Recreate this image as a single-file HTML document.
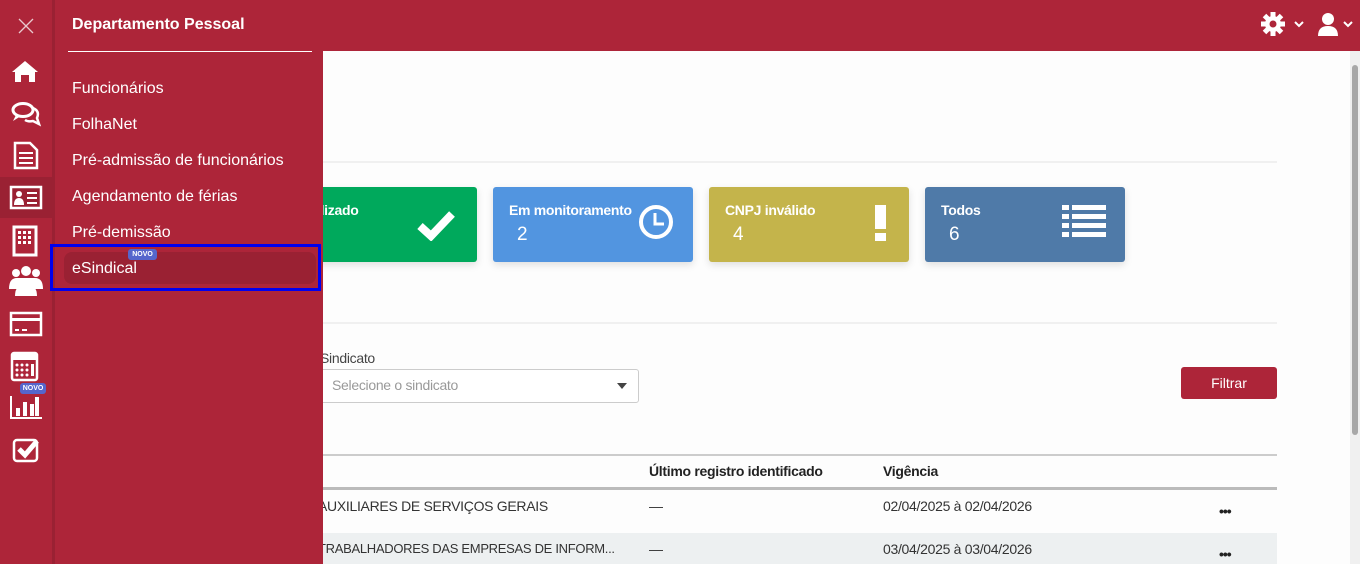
<!DOCTYPE html>
<html><head><meta charset="utf-8"><style>
*{margin:0;padding:0;box-sizing:border-box}
body{width:1360px;height:564px;overflow:hidden;font-family:"Liberation Sans",Arial,sans-serif;background:#fff;position:relative}
.top{position:absolute;left:0;top:0;width:1360px;height:51px;background:#ad2539}
.rail{position:absolute;left:0;top:0;width:52px;height:564px;background:#ad2539}
.railb{position:absolute;left:52px;top:0;width:3px;height:564px;background:#9a2133}
.panel{position:absolute;left:55px;top:0;width:268px;height:564px;background:#ad2539;color:#fff}
.main{position:absolute;left:323px;top:51px;width:1027px;height:513px;background:#fdfdfd}
.sb{position:absolute;left:1350px;top:51px;width:10px;height:513px;background:#f0f0f0}
.sb div{position:absolute;left:2px;top:14px;width:6px;height:370px;background:#a8a8a8;border-radius:3px}
.mi{position:absolute;left:17px;font-size:16px;color:#fff}
.card{position:absolute;top:187px;width:200px;height:75px;border-radius:3px;color:#fff;box-shadow:0 3px 8px rgba(0,0,0,.12)}
.card b{position:absolute;left:16px;top:15px;font-size:14px;letter-spacing:-0.3px}
.card span{position:absolute;left:24px;top:37px;font-size:19px}
.card svg{position:absolute}
.hl{position:absolute;height:2px;background:#f0f0f0}
.t{position:absolute;font-size:14px;color:#333;letter-spacing:-0.3px;white-space:nowrap}
.dots{position:absolute;left:1219px;font-weight:bold;font-size:14px;color:#222;letter-spacing:-1px}
.badge{position:absolute;background:#5566cc;color:#fff;font-size:7px;font-weight:bold;border-radius:3px;text-align:center}
</style></head><body>
<div class="top"></div>
<div class="main">
 <div class="hl" style="left:0;top:110px;width:954px"></div>
 <div class="hl" style="left:0;top:271px;width:954px"></div>
</div>
<div class="card" style="left:277px;background:#00a95c"><b>Finalizado</b>
 <svg style="left:139px;top:22px" width="40" height="32" viewBox="0 0 40 32"><path d="M4 17 L15 27 L36 5" stroke="#fff" stroke-width="8" fill="none"/></svg></div>
<div class="card" style="left:493px;background:#5295e0"><b>Em monitoramento</b><span>2</span>
 <svg style="left:144px;top:16px" width="38" height="38" viewBox="0 0 38 38"><circle cx="19" cy="19" r="15" stroke="#fff" stroke-width="4" fill="none"/><path d="M18 10 V21 H27" stroke="#fff" stroke-width="3" fill="none"/></svg></div>
<div class="card" style="left:709px;background:#c4b44b"><b>CNPJ inválido</b><span>4</span>
 <svg style="left:164px;top:18px" width="16" height="36"><rect x="2" y="0" width="11" height="24" fill="#fff"/><rect x="2" y="28" width="11" height="8" fill="#fff"/></svg></div>
<div class="card" style="left:925px;background:#4f7aa8"><b>Todos</b><span>6</span>
 <svg style="left:137px;top:18px" width="44" height="34" fill="#fff"><rect x="0" y="0" width="7" height="5"/><rect x="10" y="0" width="34" height="5"/><rect x="0" y="9" width="7" height="5"/><rect x="10" y="9" width="34" height="5"/><rect x="0" y="18" width="7" height="5"/><rect x="10" y="18" width="34" height="5"/><rect x="0" y="27" width="7" height="5"/><rect x="10" y="27" width="34" height="5"/></svg></div>
<div class="t" style="left:320px;top:350px;color:#444">Sindicato</div>
<div style="position:absolute;left:318px;top:369px;width:321px;height:34px;border:1px solid #ccc;border-radius:3px;background:#fff"></div>
<div class="t" style="left:332px;top:377px;color:#999">Selecione o sindicato</div>
<div style="position:absolute;left:617px;top:383px;border-left:5px solid transparent;border-right:5px solid transparent;border-top:6px solid #444"></div>
<div style="position:absolute;left:1181px;top:367px;width:96px;height:32px;background:#ad2539;border-radius:3px;color:#fff;font-size:14px;text-align:center;line-height:32px">Filtrar</div>
<div style="position:absolute;left:323px;top:454px;width:954px;height:2px;background:#ccc"></div>
<div style="position:absolute;left:323px;top:487px;width:954px;height:3px;background:#bbb"></div>
<div class="t" style="left:649px;top:463px;font-weight:bold;color:#222">Último registro identificado</div>
<div class="t" style="left:883px;top:463px;font-weight:bold;color:#222">Vigência</div>
<div class="t" style="left:318px;top:498px">AUXILIARES DE SERVIÇOS GERAIS</div>
<div class="t" style="left:649px;top:498px">—</div>
<div class="t" style="left:883px;top:498px">02/04/2025 à 02/04/2026</div>
<div class="dots" style="top:503px">•••</div>
<div style="position:absolute;left:323px;top:533px;width:954px;height:31px;background:#edf0f1"></div>
<div class="t" style="left:318px;top:541px;font-size:13px">TRABALHADORES DAS EMPRESAS DE INFORM...</div>
<div class="t" style="left:649px;top:541px">—</div>
<div class="t" style="left:883px;top:541px">03/04/2025 à 03/04/2026</div>
<div class="dots" style="top:546px">•••</div>
<div class="sb"><div></div></div>
<svg style="position:absolute;left:1260px;top:12px" width="100" height="26" fill="#fff">
 <g transform="translate(13,12)"><circle r="8"/><g stroke="#fff" stroke-width="5"><line x1="0" y1="-12" x2="0" y2="12"/><line x1="-12" y1="0" x2="12" y2="0"/><line x1="-8.5" y1="-8.5" x2="8.5" y2="8.5"/><line x1="-8.5" y1="8.5" x2="8.5" y2="-8.5"/></g><circle r="3.5" fill="#ad2539"/></g>
 <path d="M35 10 l4 4 l4 -4" stroke="#fff" stroke-width="2" fill="none"/>
 <circle cx="68" cy="7" r="6"/><path d="M58 24 q0 -10 10 -10 q10 0 10 10z"/>
 <path d="M84 10 l4 4 l4 -4" stroke="#fff" stroke-width="2" fill="none"/>
</svg>
<div class="rail"></div><div class="railb"></div>
<div style="position:absolute;left:0;top:177px;width:52px;height:41px;background:#9a2133"></div>
<svg style="position:absolute;left:0;top:0" width="52" height="470" fill="#fff">
 <path d="M19 19 L33 33 M33 19 L19 33" stroke="#e9c9ce" stroke-width="1.3"/>
 <path d="M12 72 L25 61 L38 72 L35 72 L35 82 L29 82 L29 75 L21 75 L21 82 L15 82 L15 72z"/>
 <ellipse cx="23" cy="110" rx="10" ry="6.5" fill="none" stroke="#fff" stroke-width="3"/><path d="M16 115 L13 121 L21 116z"/><path d="M33 108 q7 3 4 10 l2 6 l-6 -3 q-5 1 -8 -1" fill="none" stroke="#fff" stroke-width="2.5"/>
 <path d="M15 143 H30 L37 150 V168 H15z" fill="none" stroke="#fff" stroke-width="2.5"/><path d="M19 153 H33 M19 158 H33 M19 163 H33" stroke="#fff" stroke-width="2"/>
 <rect x="11" y="187" width="30" height="21" fill="none" stroke="#fff" stroke-width="2.5"/><circle cx="19" cy="194" r="3"/><path d="M14 205 q0 -7 5 -7 q5 0 5 7z"/><path d="M27 193 H37 M27 198 H37 M27 203 H37" stroke="#fff" stroke-width="2"/>
 <rect x="14" y="227" width="22" height="28" fill="none" stroke="#fff" stroke-width="3"/><g><rect x="18" y="231" width="3" height="3"/><rect x="23" y="231" width="3" height="3"/><rect x="28" y="231" width="3" height="3"/><rect x="18" y="236" width="3" height="3"/><rect x="23" y="236" width="3" height="3"/><rect x="28" y="236" width="3" height="3"/><rect x="18" y="241" width="3" height="3"/><rect x="23" y="241" width="3" height="3"/><rect x="28" y="241" width="3" height="3"/></g>
 <circle cx="16" cy="273" r="4"/><circle cx="36" cy="273" r="4"/><circle cx="26" cy="271" r="5"/><path d="M9 289 q0 -11 8 -11 h18 q8 0 8 11z"/><path d="M15 296 q0 -12 11 -12 q11 0 11 12z"/>
 <rect x="11" y="313" width="30" height="22" fill="none" stroke="#fff" stroke-width="2.5"/><rect x="11" y="318" width="30" height="3"/><path d="M15 330 h4 M22 330 h5" stroke="#fff" stroke-width="2"/>
 <rect x="12" y="353" width="25" height="27" rx="2" fill="none" stroke="#fff" stroke-width="2.5"/><rect x="12" y="353" width="25" height="7"/><g><circle cx="17" cy="365" r="1.5"/><circle cx="22" cy="365" r="1.5"/><circle cx="27" cy="365" r="1.5"/><circle cx="17" cy="370" r="1.5"/><circle cx="22" cy="370" r="1.5"/><circle cx="27" cy="370" r="1.5"/><circle cx="17" cy="375" r="1.5"/><circle cx="22" cy="375" r="1.5"/><circle cx="27" cy="375" r="1.5"/><rect x="31" y="364" width="3" height="12"/></g>
 <path d="M11 396 V418 H42" fill="none" stroke="#fff" stroke-width="2"/><rect x="16" y="408" width="4" height="8"/><rect x="23" y="402" width="4" height="14"/><rect x="30" y="404" width="4" height="12"/><rect x="35" y="397" width="4" height="19"/>
 <rect x="14" y="440" width="23" height="21" rx="3" fill="none" stroke="#fff" stroke-width="2.5"/><path d="M19 449 L25 455 L37 441" stroke="#fff" stroke-width="5" fill="none"/>
</svg>
<div class="badge" style="left:20px;top:383px;width:26px;height:11px;line-height:11px">NOVO</div>
<div class="panel">
 <div style="position:absolute;left:17px;top:16px;font-size:16px;font-weight:bold">Departamento Pessoal</div>
 <div style="position:absolute;left:13px;top:51px;width:244px;height:1px;background:#fff"></div>
 <div class="mi" style="top:80px">Funcionários</div>
 <div class="mi" style="top:116px">FolhaNet</div>
 <div class="mi" style="top:152px">Pré-admissão de funcionários</div>
 <div class="mi" style="top:188px">Agendamento de férias</div>
 <div class="mi" style="top:224px">Pré-demissão</div>
 <div style="position:absolute;left:9px;top:252px;width:252px;height:32px;background:#9a2133;border-radius:8px"></div>
 <div class="mi" style="top:260px">eSindical</div>
 <div class="badge" style="left:73px;top:249px;width:29px;height:11px;line-height:11px">NOVO</div>
 <div style="position:absolute;left:-5px;top:244px;width:271px;height:47px;border:3px solid #0000ee"></div>
</div>
</body></html>
